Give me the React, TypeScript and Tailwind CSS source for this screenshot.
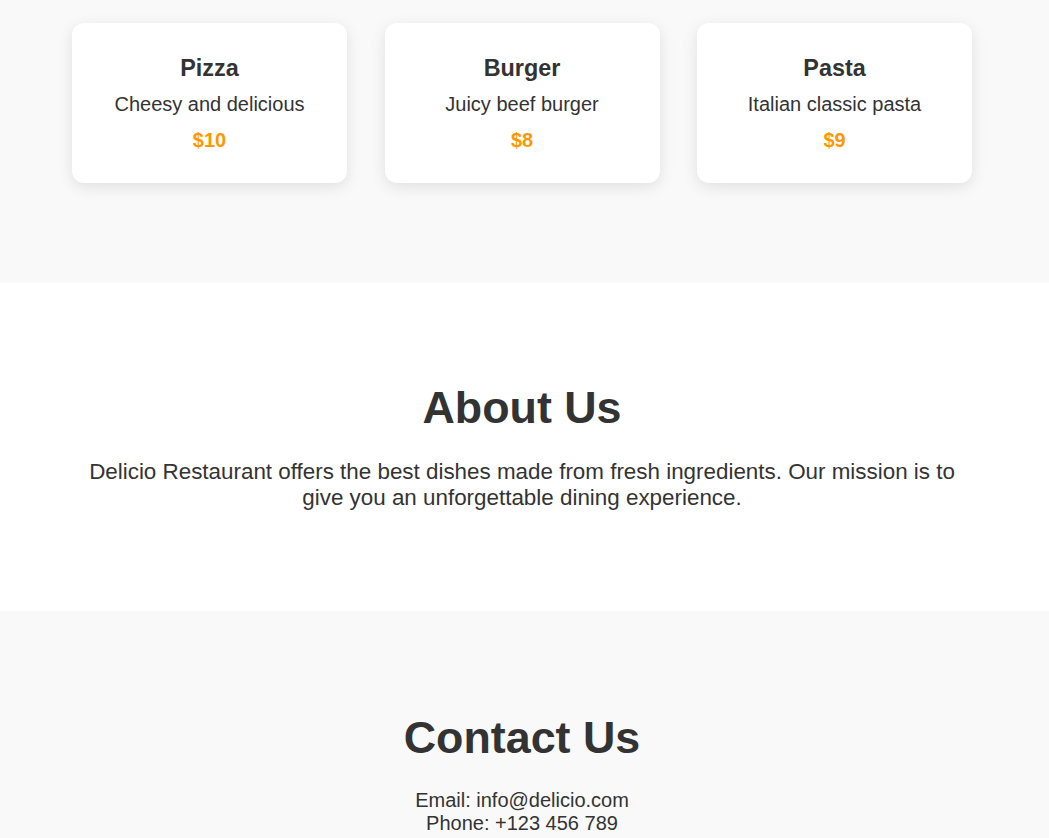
import React from "react";

interface Dish {
  name: string;
  description: string;
  price: string;
}

const dishes: Dish[] = [
  { name: "Pizza", description: "Cheesy and delicious", price: "$10" },
  { name: "Burger", description: "Juicy beef burger", price: "$8" },
  { name: "Pasta", description: "Italian classic pasta", price: "$9" },
];

const DishCard: React.FC<{ dish: Dish }> = ({ dish }) => (
  <div className="flex flex-col items-center rounded-[12px] bg-white pt-[32px] pb-[31px] text-center shadow-[0_4px_15px_rgba(0,0,0,0.1)]">
    <h3 className="mb-[11px] text-[23.4px] font-bold leading-[27px] text-[#333]">{dish.name}</h3>
    <p className="mb-[13px] text-[20px] leading-[23px] text-[#333]">{dish.description}</p>
    <p className="text-[20px] font-bold leading-[23px] text-[#ff9800]">{dish.price}</p>
  </div>
);

const App: React.FC = () => {
  return (
    <div className="min-h-screen bg-[#f9f9f9] font-['Liberation_Sans',Arial,sans-serif] text-[#333]">
      {/* menu (scrolled, heading is above the fold) */}
      <section className="bg-[#f9f9f9] pt-[23px] pb-[100px] pr-[5px]">
        <div className="mx-auto grid max-w-[900px] grid-cols-3 gap-[37.5px]">
          {dishes.map((dish) => (
            <DishCard key={dish.name} dish={dish} />
          ))}
        </div>
      </section>

      {/* about */}
      <section className="bg-white pt-[99px] pb-[100px] pr-[5px] text-center">
        <div className="mx-auto max-w-[900px]">
          <h2 className="mb-[25.5px] text-[44.8px] font-bold leading-[51.5px]">About Us</h2>
          <p className="text-[22.4px] leading-[26px]">
            Delicio Restaurant offers the best dishes made from fresh ingredients. Our mission is to give you an
            unforgettable dining experience.
          </p>
        </div>
      </section>

      {/* contact */}
      <section className="bg-[#f9f9f9] pt-[101px] pb-[100px] pr-[5px] text-center">
        <div className="mx-auto max-w-[900px]">
          <h2 className="mb-[25px] text-[44.8px] font-bold leading-[51.5px]">Contact Us</h2>
          <p className="text-[20px] leading-[23px]">Email: info@delicio.com</p>
          <p className="text-[20px] leading-[23px]">Phone: +123 456 789</p>
        </div>
      </section>
    </div>
  );
};

export default App;
